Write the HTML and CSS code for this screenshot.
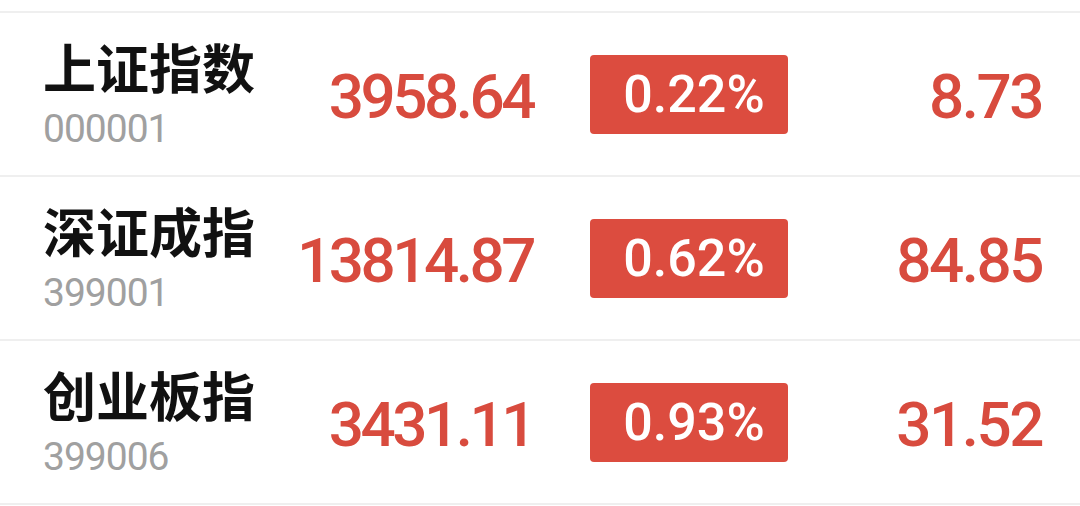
FILE: index.html
```html
<!DOCTYPE html>
<html lang="zh-CN">
<head>
    <meta charset="UTF-8">
    <meta name="viewport" content="width=device-width, initial-scale=1.0">
    <title>指数行情</title>
    <link rel="stylesheet" href="styles.css">
</head>
<body>

<div class="index-list">
    <div class="index-row">
        <div class="index-name">
            <div class="name">上证指数</div>
            <div class="code">000001</div>
        </div>
        <div class="price">3958.64</div>
        <div class="rate"><span>0.22%</span></div>
        <div class="change">8.73</div>
    </div>
    <div class="index-row">
        <div class="index-name">
            <div class="name">深证成指</div>
            <div class="code">399001</div>
        </div>
        <div class="price">13814.87</div>
        <div class="rate"><span>0.62%</span></div>
        <div class="change">84.85</div>
    </div>
    <div class="index-row">
        <div class="index-name">
            <div class="name">创业板指</div>
            <div class="code">399006</div>
        </div>
        <div class="price">3431.11</div>
        <div class="rate"><span>0.93%</span></div>
        <div class="change">31.52</div>
    </div>
</div>

</body>
</html>
```

FILE: styles.css
```css
body {
    margin: 0;
    padding: 0;
    background-color: #fff;
    font-family: Roboto, "Noto Sans CJK SC", sans-serif;
    color: #111;
}
.index-list {
    padding-top: 11px;
    border-bottom: 2px solid #efefef;
}
.index-row {
    display: grid;
    grid-template-columns: 230px 260px 255px 1fr;
    align-items: center;
    height: 162px;
    padding: 0 38px 0 43px;
    border-top: 2px solid #efefef;
}
.index-name .name {
    font-family: "Noto Sans CJK SC", sans-serif;
    font-size: 53px;
    font-weight: 700;
    line-height: 56px;
    color: #111;
}
.index-name .code {
    font-size: 39px;
    line-height: 42px;
    color: #a0a0a0;
    letter-spacing: -1px;
    margin-top: 14px;
}
.price,
.change {
    font-size: 62px;
    font-weight: 500;
    color: #d84b3e;
    letter-spacing: -3.5px;
    text-align: right;
    padding-top: 5px;
}
.change {
    letter-spacing: -2.5px;
}
.rate {
    justify-self: end;
}
.rate span {
    display: flex;
    align-items: center;
    justify-content: center;
    box-sizing: border-box;
    width: 198px;
    height: 79px;
    padding-left: 10px;
    border-radius: 4px;
    background-color: #dc4c3f;
    color: #fff;
    font-size: 52px;
    font-weight: 500;
}
```
